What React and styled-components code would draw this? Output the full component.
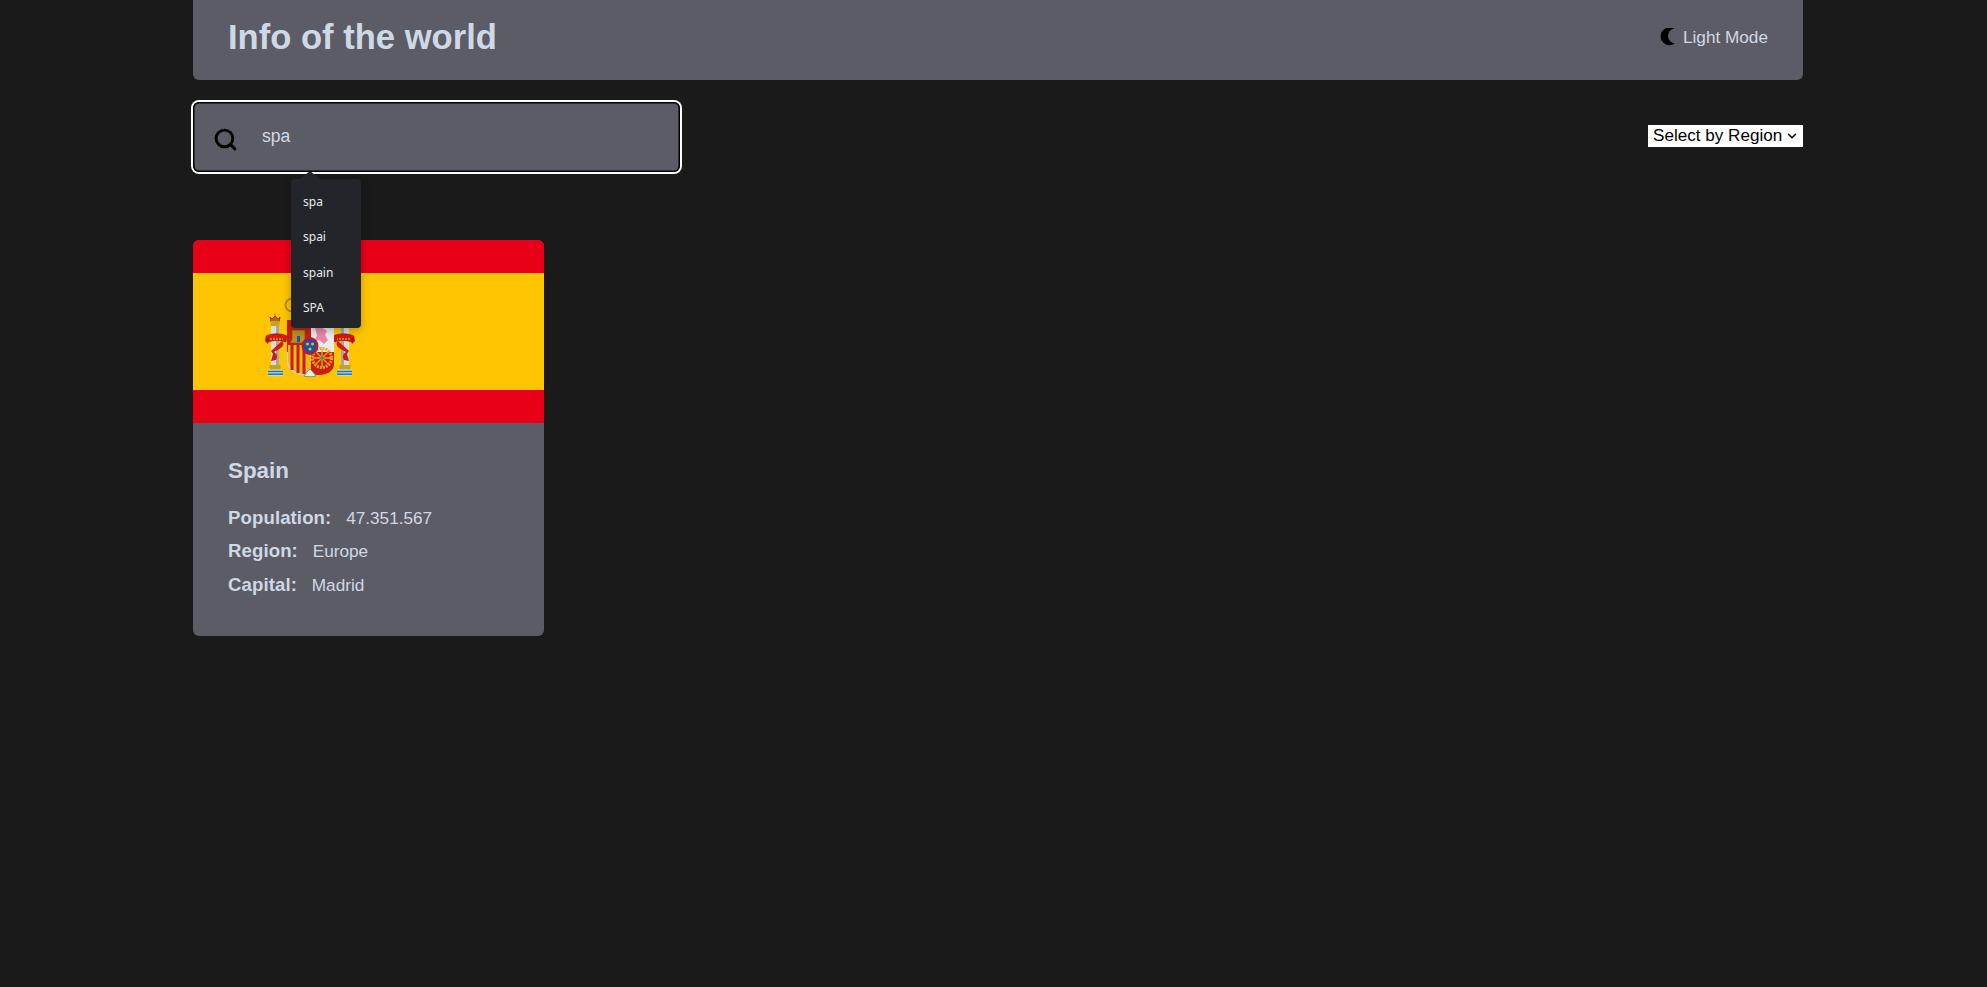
import React from "react";
import styled, { createGlobalStyle } from "styled-components";
import { Search, ChevronDown } from "lucide-react";

const Global = createGlobalStyle`
  html, body { margin: 0; padding: 0; height: 100%; overflow: hidden; background: #1a1a1a; }
  body { font-family: "Liberation Sans", Arial, sans-serif; font-size: 17.2px; color: #cfd8e5; }
  * { box-sizing: border-box; }
`;

const Page = styled.div`
  width: 1610px;
  margin: 0 0 0 193px;
  display: flex;
  flex-direction: column;
`;

const Header = styled.header`
  height: 80px;
  padding: 0 35px;
  display: flex;
  align-items: center;
  justify-content: space-between;
  background: #5c5c66;
  border-radius: 0 0 6px 6px;
`;

const Title = styled.h1`
  margin: 0;
  font-size: 34.6px;
  font-weight: 700;
  line-height: 1;
  position: relative;
  top: -3px;
`;

const ModeToggle = styled.div`
  display: flex;
  align-items: center;
  gap: 6px;
  position: relative;
  top: -3px;
`;

const Toolbar = styled.div`
  margin-top: 22px;
  display: flex;
  align-items: center;
  justify-content: space-between;
`;

const SearchBox = styled.div`
  position: relative;
  width: 487px;
  height: 70px;
  padding-left: 20px;
  display: flex;
  align-items: center;
  gap: 24px;
  background: #5c5c66;
  border-radius: 6px;
  box-shadow: inset 0 0 0 1.5px #000, 0 0 0 2px #fff;
`;

const SearchIcon = styled(Search)`
  flex: none;
  position: relative;
  top: 2px;
  color: #000;
`;

const SearchInput = styled.input`
  flex: 1;
  min-width: 0;
  border: 0;
  outline: 0;
  padding: 0;
  background: transparent;
  color: inherit;
  font: inherit;
  font-size: 17.6px;
  position: relative;
  top: -1px;
`;

const Suggestions = styled.ul`
  position: absolute;
  left: 98px;
  top: 77px;
  width: 70px;
  margin: 0;
  padding: 5px 0 3px;
  list-style: none;
  background: #23252a;
  border-radius: 4px;
  box-shadow: 0 3px 8px rgba(0, 0, 0, 0.25);
  font-family: "Noto Sans", "Open Sans", sans-serif;
  font-size: 12px;
  color: #e6e9ee;
  z-index: 2;

  &::before {
    content: "";
    position: absolute;
    left: 9px;
    top: -8px;
    width: 0;
    height: 0;
    border-left: 10px solid transparent;
    border-right: 10px solid transparent;
    border-bottom: 8px solid #23252a;
  }
`;

const Suggestion = styled.li`
  height: 35.25px;
  line-height: 35.25px;
  padding-left: 12px;
`;

const SelectWrap = styled.div`
  position: relative;
  width: 155px;
  height: 22px;
  margin-bottom: 2px;
`;

const RegionSelect = styled.select`
  display: block;
  appearance: none;
  font-family: "Liberation Sans", Arial, sans-serif;
  font-size: 17.1px;
  line-height: 22px;
  background: #fff;
  color: #000;
  border: 0;
  border-radius: 0;
  height: 22px;
  width: 100%;
  padding: 0 0 0 5px;
`;

const SelectArrow = styled(ChevronDown)`
  position: absolute;
  right: 4px;
  top: 4px;
  color: #000;
  pointer-events: none;
`;

const CardGrid = styled.section`
  margin-top: 68px;
  display: grid;
  grid-template-columns: 351px;
`;

const Card = styled.article`
  background: #5c5c66;
  border-radius: 6px;
  overflow: hidden;
  height: 396px;
`;

const Flag = styled.svg`
  display: block;
  width: 351px;
  height: 183px;
`;

const CardBody = styled.div`
  padding: 35px 35px 0;
`;

const CardName = styled.h2`
  margin: 0 0 17px;
  font-size: 22.4px;
  font-weight: 700;
  line-height: 26px;
`;

const Fact = styled.p`
  margin: 0;
  height: 33.3px;
  line-height: 33.3px;
`;

const FactLabel = styled.strong`
  font-size: 18.6px;
  font-weight: 700;
  margin-right: 10px;
  letter-spacing: 0.1px;
`;

const Footer = styled.footer`
  margin-top: 353px;
  padding-left: 170px;
  text-align: center;
  font-size: 16px;
  color: #777;
`;

const FooterLink = styled.a`
  color: #1e9bd8;
  text-decoration: none;
`;

function Pillar() {
  return (
    <g>
      <path d="M270 317l2 2 3-3 3 3 2-2-1 5h-8z" fill="#b5651d" stroke="#8d1b10" strokeWidth=".8" />
      <circle cx="275" cy="314.500" r="1.200" fill="#c9a227" />
      <rect x="270.500" y="321" width="9" height="5" fill="#c5a21f" />
      <rect x="271" y="326" width="8" height="39" fill="#dcdcdc" />
      <rect x="276" y="326" width="3" height="39" fill="#a5a5a5" />
      <rect x="269.500" y="365" width="11" height="4.500" fill="#c5a21f" />
      <rect x="268" y="369.500" width="15" height="6.500" fill="#c9d6cf" />
      <path d="M268 371.500h15M268 374.200h15" stroke="#1f78ad" strokeWidth="1.500" />
      <path d="M266 336c6-3 15-3 21 0l-1 6c-6-2-12-2-18 0z" fill="#d01a12" stroke="#8b1a10" strokeWidth=".6" />
      <path d="M266 336l-1 5 3 3 1-4z" fill="#b31410" />
      <path d="M283 342c2 4-3 7-9 10 3 2 4 4 2 8l-5 1 2-7-2-3 11-10z" fill="#d01a12" />
      <path d="M270 339h13" stroke="#e8c547" strokeWidth="1" strokeDasharray="2 1" />
    </g>
  );
}

function CoatOfArms() {
  return (
    <g>
      <circle cx="292" cy="305" r="6.500" fill="none" stroke="#b88a1a" strokeWidth="2" />
      <Pillar />
      <g transform="translate(620 0) scale(-1 1)">
        <Pillar />
      </g>
      <path d="M287 320h47v42c0 9-10 14-23.500 14s-23.500-5-23.500-14z" fill="#cfcfc0" />
      <rect x="287" y="320" width="24" height="32" fill="#cf1b16" />
      <rect x="311" y="320" width="23" height="32" fill="#ececec" />
      <path d="M315 328l6-1 6 4-2 4 3 5-4 4-5-4-4 1 2-6z" fill="#ee85a8" />
      <path d="M292 330h13v9l2 4h-17l2-4z" fill="#b98f1e" stroke="#6d5412" strokeWidth=".6" />
      <rect x="297" y="336" width="3" height="6" fill="#1450c8" />
      <path d="M288 345h23v29c-13 1-20-3-23-12z" fill="#e6b91e" />
      <path d="M292 345v25M298 345v28M304 345v29" stroke="#cf1b16" strokeWidth="3" />
      <path d="M311 352h23v12c0 7-7 11-15 11-4 0-8-1-8-2z" fill="#cf1b16" />
      <circle cx="322" cy="358" r="9.500" fill="none" stroke="#e6a91e" strokeWidth="3" strokeDasharray="2 1" />
      <path d="M322 349v18M313 358h18M316 352l12 12M328 352l-12 12" stroke="#e6a91e" strokeWidth="1.300" />
      <circle cx="322" cy="358" r="1.800" fill="#1a9a5a" />
      <path d="M304 376c2-3 4-5 6-7 2 2 4 4 6 7-4 1-8 1-12 0z" fill="#e8e8e8" stroke="#3f8a5a" strokeWidth=".7" />
      <ellipse cx="310" cy="346" rx="7.500" ry="8" fill="#1c50a8" stroke="#c8161a" strokeWidth="2" />
      <circle cx="307.500" cy="344" r="1.500" fill="#e8b91e" />
      <circle cx="312.500" cy="344" r="1.500" fill="#e8b91e" />
      <circle cx="310" cy="349" r="1.500" fill="#e8b91e" />
    </g>
  );
}

export default function App() {
  return (
    <>
      <Global />
      <Page>
        <Header>
          <Title>Info of the world</Title>
          <ModeToggle>
            <svg width="18" height="19" viewBox="0 0 18 19">
              <path d="M15 .5A9 9 0 1 0 16 15.500 7.600 7.600 0 0 1 15 .5Z" fill="#000" />
            </svg>
            Light Mode
          </ModeToggle>
        </Header>
        <Toolbar>
          <SearchBox>
            <SearchIcon size={25} strokeWidth={2.8} />
            <SearchInput defaultValue="spa" />
            <Suggestions>
              <Suggestion>spa</Suggestion>
              <Suggestion>spai</Suggestion>
              <Suggestion>spain</Suggestion>
              <Suggestion>SPA</Suggestion>
            </Suggestions>
          </SearchBox>
          <SelectWrap>
            <RegionSelect defaultValue="">
              <option value="">Select by Region</option>
              <option>Africa</option>
              <option>America</option>
              <option>Asia</option>
              <option>Europe</option>
              <option>Oceania</option>
            </RegionSelect>
            <SelectArrow size={14} strokeWidth={2.6} />
          </SelectWrap>
        </Toolbar>
        <CardGrid>
          <Card>
            <Flag viewBox="193 240 351 183">
              <rect x="193" y="240" width="351" height="183" fill="#e80018" />
              <rect x="193" y="273" width="351" height="117" fill="#ffc500" />
              <CoatOfArms />
            </Flag>
            <CardBody>
              <CardName>Spain</CardName>
              <Fact><FactLabel>Population:</FactLabel> 47.351.567</Fact>
              <Fact><FactLabel>Region:</FactLabel> Europe</Fact>
              <Fact><FactLabel>Capital:</FactLabel> Madrid</Fact>
            </CardBody>
          </Card>
        </CardGrid>
        <Footer>
          Challenge by <FooterLink href="#">Mentor</FooterLink>
        </Footer>
      </Page>
    </>
  );
}
